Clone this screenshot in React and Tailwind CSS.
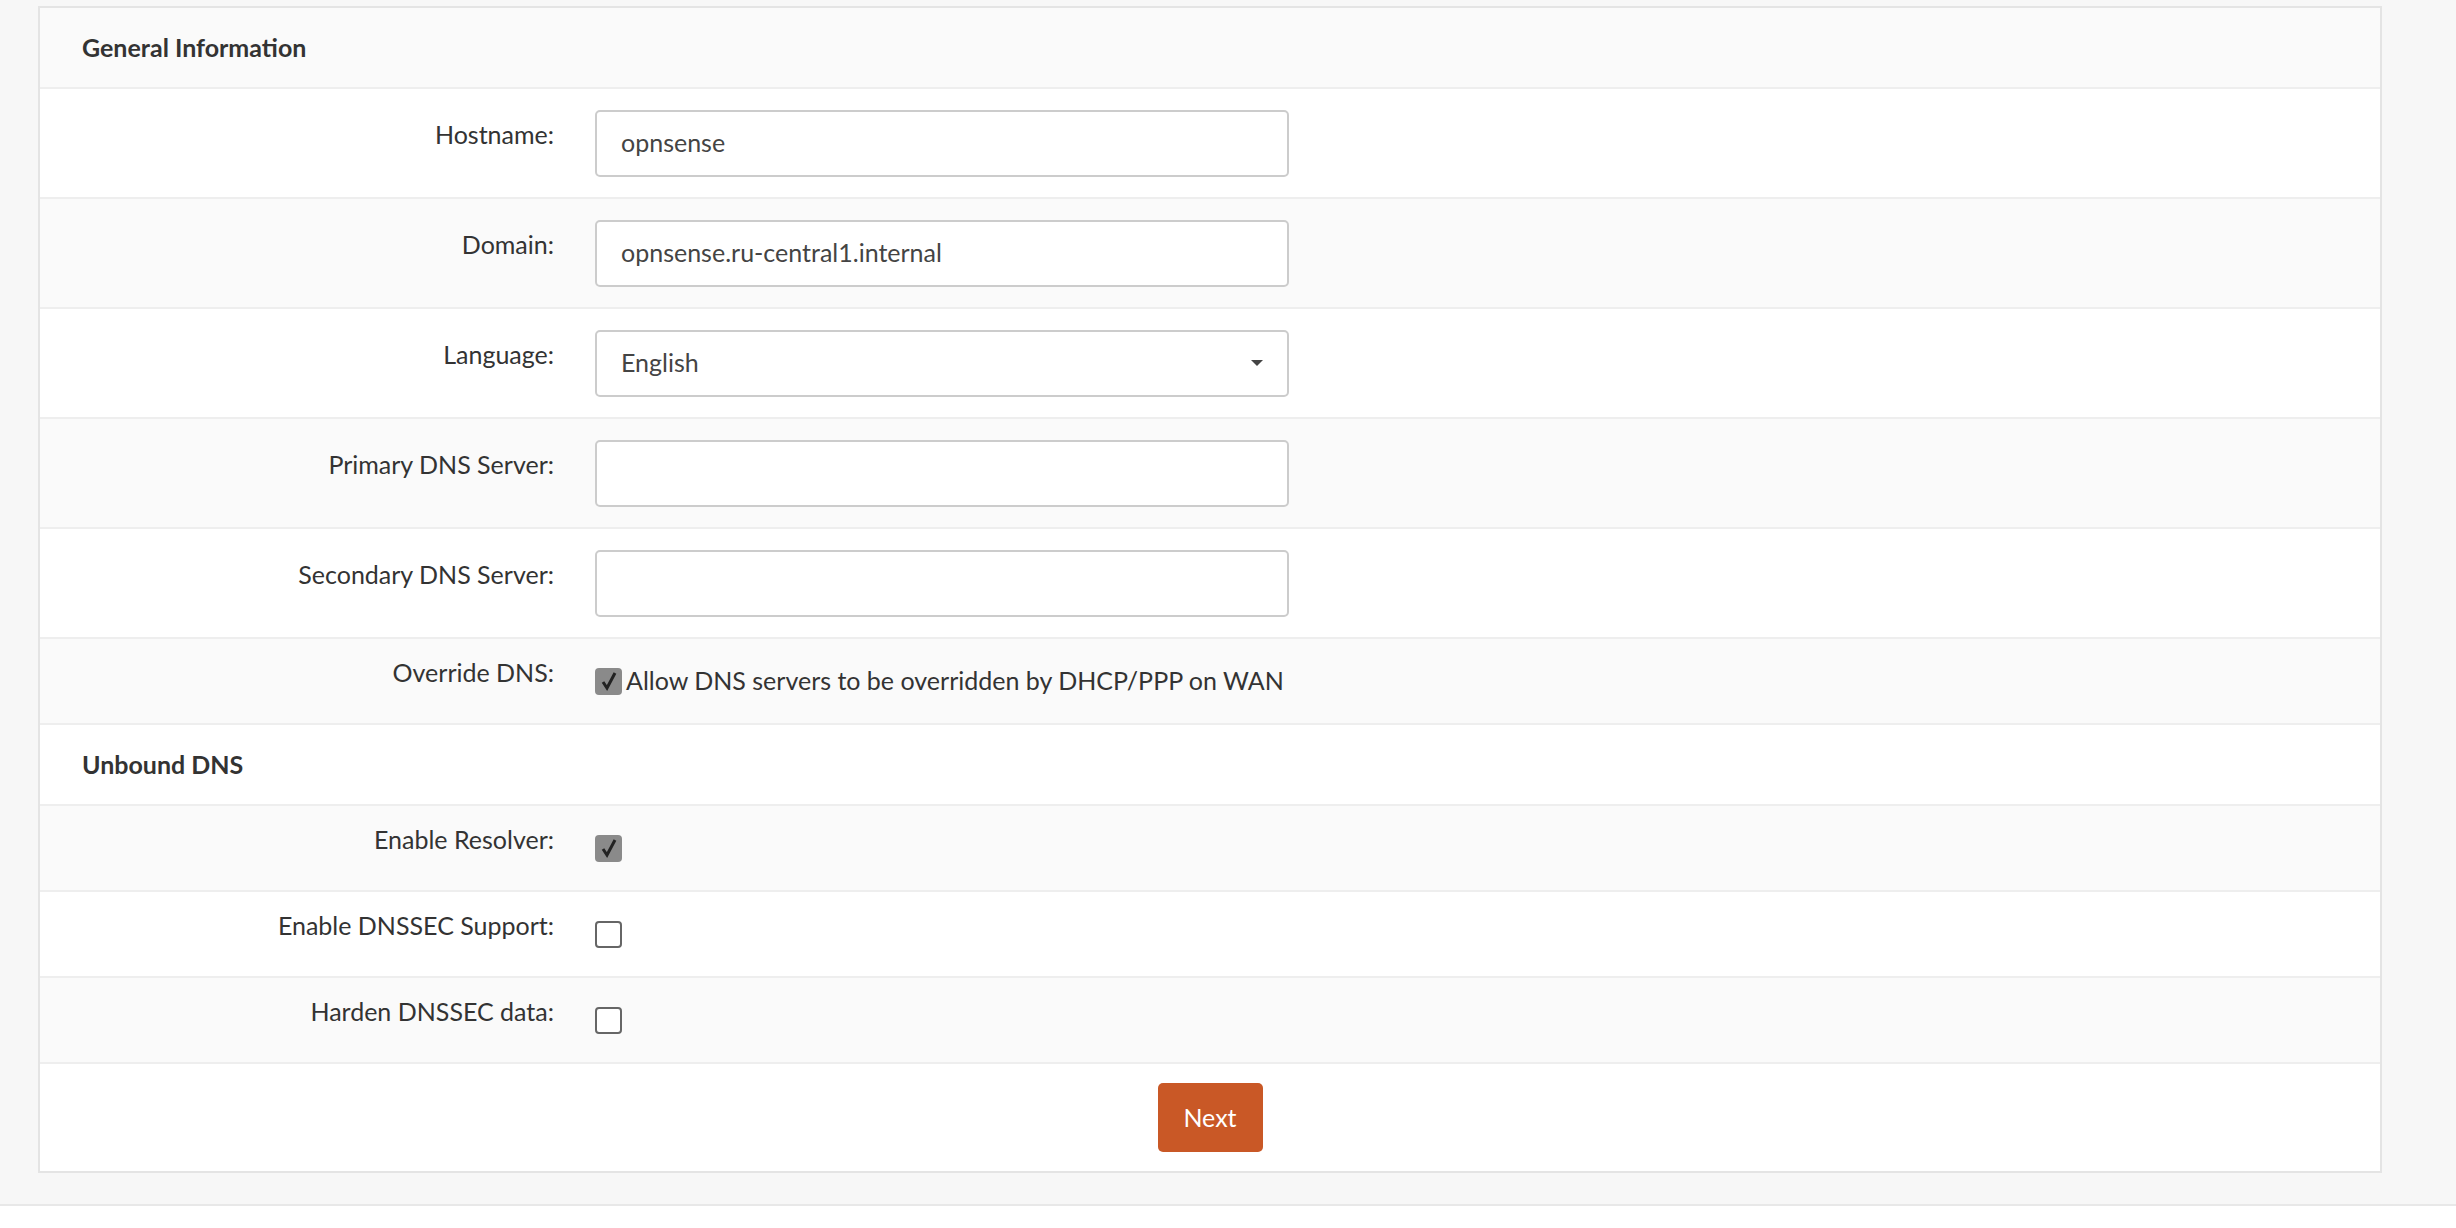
import React from "react";

const Label = ({ children }) => (
  <div className="w-[514px] shrink-0 -translate-y-[8px] text-right text-[25px] text-[#333]">{children}</div>
);

const Row = ({ label, shaded, tall = true, children }) => (
  <div
    className={`flex items-center border-b-2 border-[#eeeeee] ${shaded ? "bg-[#fafafa]" : "bg-white"} ${
      tall ? "h-[110px]" : "h-[86px]"
    }`}
  >
    <Label>{label}</Label>
    <div className="ml-[41px] flex items-center">{children}</div>
  </div>
);

const Input = ({ value }) => (
  <div className="flex h-[67px] w-[694px] items-center rounded-[5px] border-2 border-[#cccccc] bg-white px-[24px] text-[25px] text-[#444]">
    {value}
  </div>
);

const Check = ({ checked }) =>
  checked ? (
    <span className="flex h-[27px] w-[27px] items-center justify-center rounded-[4px] bg-[#8a8a8a]">
      <svg width="18" height="20" viewBox="0 0 18 20">
        <path d="M3 11 L7 17 L15 2" stroke="#222" strokeWidth="3" fill="none" />
      </svg>
    </span>
  ) : (
    <span className="h-[27px] w-[27px] rounded-[4px] border-2 border-[#666] bg-white" />
  );

const Section = ({ title, shaded }) => (
  <div
    className={`flex h-[81px] items-center border-b-2 border-[#eeeeee] pl-[42px] text-[25px] font-bold text-[#333] ${
      shaded ? "bg-[#fafafa]" : "bg-white"
    }`}
  >
    {title}
  </div>
);

export default function App() {
  return (
    <div className="min-h-[1228px] bg-white" style={{ fontFamily: "'Source Sans Pro', Lato, 'Noto Sans', sans-serif" }}>
      <div className="h-[1206px] border-b-2 border-[#e8e8e8] bg-[#f7f7f7] pl-[38px] pr-[74px] pt-[6px]">
        <div className="border-2 border-[#e4e4e4] bg-white">
          <Section title="General Information" shaded />
          <Row label="Hostname:">
            <Input value="opnsense" />
          </Row>
          <Row label="Domain:" shaded>
            <Input value="opnsense.ru-central1.internal" />
          </Row>
          <Row label="Language:">
            <div className="flex h-[67px] w-[694px] items-center justify-between rounded-[5px] border-2 border-[#cccccc] bg-white px-[24px] text-[25px] text-[#444]">
              English
              <span className="h-0 w-0 border-x-[6px] border-t-[6px] border-x-transparent border-t-[#444]" />
            </div>
          </Row>
          <Row label="Primary DNS Server:" shaded>
            <Input value="" />
          </Row>
          <Row label="Secondary DNS Server:">
            <Input value="" />
          </Row>
          <Row label="Override DNS:" shaded tall={false}>
            <div className="flex items-center gap-[4px] text-[25px] text-[#333]">
              <Check checked />
              Allow DNS servers to be overridden by DHCP/PPP on WAN
            </div>
          </Row>
          <Section title="Unbound DNS" />
          <Row label="Enable Resolver:" shaded tall={false}>
            <Check checked />
          </Row>
          <Row label="Enable DNSSEC Support:" tall={false}>
            <Check />
          </Row>
          <Row label="Harden DNSSEC data:" shaded tall={false}>
            <Check />
          </Row>
          <div className="flex h-[107px] items-center justify-center bg-white">
            <button className="h-[69px] w-[105px] rounded-[5px] bg-[#c95826] text-[25px] text-white">Next</button>
          </div>
        </div>
      </div>
    </div>
  );
}
